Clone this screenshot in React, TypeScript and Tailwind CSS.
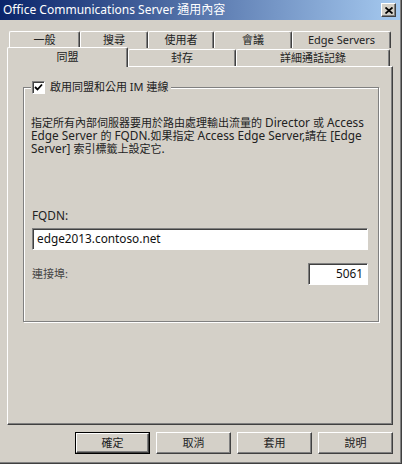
import React from "react";

const font = { fontFamily: '"Noto Sans", "Noto Sans CJK TC", sans-serif' };

function Tab({ w, label, sel, down }: { w: string; label: string; sel?: boolean; down?: boolean }) {
  return (
    <div
      className={`${w} ${sel ? "relative z-10 h-[20px] bg-[#d4d0c8]" : down ? "mt-[2px] h-[17px]" : "h-[17px]"} flex items-start justify-center border-l border-t border-white border-r border-r-[#404040] shadow-[inset_-1px_0_0_#808080] rounded-t-[2px] text-[11px] leading-[14px] text-[#222] ${sel ? "pt-[2px]" : "pt-[1px]"}`}
    >
      {label}
    </div>
  );
}

function Button({ label, def }: { label: string; def?: boolean }) {
  return (
    <div className={`w-[75px] h-[22px] ${def ? "border border-black" : ""}`}>
      <div className="h-full w-full flex items-center justify-center text-[11px] text-[#222] border-l border-t border-white border-r border-b border-r-[#404040] border-b-[#404040] shadow-[inset_-1px_-1px_0_#808080]">
        {label}
      </div>
    </div>
  );
}

function L({ children }: { children: React.ReactNode }) {
  return <span className="text-[11.8px]">{children}</span>;
}

export default function App() {
  return (
    <div style={font} className="w-[402px] h-[464px] border-r border-b border-[#404040] bg-[#d4d0c8]">
      <div className="h-full w-full border-r border-b border-[#808080] flex flex-col">
        {/* title bar */}
        <div className="h-[20px] flex items-center justify-between bg-[linear-gradient(to_right,#0a246a,#a6caf0)]">
          <span className="pl-[3px] text-white text-[12px] leading-[20px] whitespace-nowrap">
            Office Communications Server 通用內容
          </span>
          <div className="mr-[4px] w-[15px] h-[14px] bg-[#d4d0c8] border-l border-t border-white border-r border-b border-r-[#404040] border-b-[#404040] shadow-[inset_-1px_-1px_0_#808080] flex items-center justify-center">
            <svg width="8" height="7" viewBox="0 0 8 7">
              <path d="M0.5 0.5 L7.5 6.5 M7.5 0.5 L0.5 6.5" stroke="#000" strokeWidth="1.8" />
            </svg>
          </div>
        </div>

        {/* tabs */}
        <div className="pt-[11px]">
          <div className="flex pl-[9px] h-[16px]">
            <Tab w="w-[71px]" label="一般" />
            <Tab w="w-[68px]" label="搜尋" />
            <Tab w="w-[66px]" label="使用者" />
            <Tab w="w-[78px]" label="會議" />
            <Tab w="w-[99px]" label="Edge Servers" />
          </div>
          <div className="flex items-start pl-[7px] h-[19px]">
            <Tab w="w-[121px]" label="同盟" sel />
            <Tab w="w-[108px]" label="封存" down />
            <Tab w="w-[154px]" label="詳細通話記錄" down />
          </div>
        </div>

        {/* panel */}
        <div className="ml-[7px] w-[386px] h-[359px] border-l border-t border-white border-r border-b border-r-[#404040] border-b-[#404040] shadow-[inset_-1px_-1px_0_#808080] pt-[20px] pl-[15px]">
          <div className="relative w-[356px] h-[235px] border border-[#808080] shadow-[inset_1px_1px_0_#fff,1px_1px_0_#fff] pl-[7px] pr-[10px]">
            <div className="absolute left-[7px] top-[-8px] flex items-center gap-[5px] bg-[#d4d0c8] pl-px pr-[3px]">
              <div className="w-[13px] h-[13px] bg-white border-l border-t border-[#808080] border-r border-b border-r-white border-b-white shadow-[inset_1px_1px_0_#404040] flex items-center justify-center">
                <svg width="9" height="9" viewBox="0 0 9 9">
                  <path d="M1 4 L3.5 6.5 L8 1.5" stroke="#000" strokeWidth="1.8" fill="none" />
                </svg>
              </div>
              <span className="text-[11px] leading-[14px] text-[#222] whitespace-nowrap">啟用同盟和公用 IM 連線</span>
            </div>

            <div className="pt-[28px] text-[11px] leading-[13px] text-[#222] whitespace-nowrap">
              <div className="h-[13px] flex items-center">
                <span>
                  指定所有內部伺服器要用於路由處理輸出流量的<L> Director </L>或<L> Access</L>
                </span>
              </div>
              <div className="h-[13px] flex items-center">
                <span>
                  <L>Edge Server </L>的<L> FQDN.</L>如果指定<L> Access Edge Server,</L>請在<L> [Edge</L>
                </span>
              </div>
              <div className="h-[13px] flex items-center">
                <span>
                  <L>Server] </L>索引標籤上設定它<L>.</L>
                </span>
              </div>
            </div>

            <div className="mt-[54px] pl-px text-[11.8px] leading-[13px] text-[#222]">FQDN:</div>
            <div className="mt-[6px] ml-px h-[22px] bg-white border-l border-t border-[#808080] border-r border-b border-r-white border-b-white shadow-[inset_1px_1px_0_#404040] flex items-center pl-[4px] text-[11.8px] text-[#111]">
              edge2013.contoso.net
            </div>
            <div className="mt-[13px] ml-px flex items-center justify-between">
              <span className="text-[11px] text-[#444]">連接埠:</span>
              <div className="w-[60px] h-[22px] bg-white border-l border-t border-[#808080] border-r border-b border-r-white border-b-white shadow-[inset_1px_1px_0_#404040] flex items-center justify-end pr-[4px] text-[11.8px] text-[#111]">
                5061
              </div>
            </div>
          </div>
        </div>

        {/* buttons */}
        <div className="mt-[7px] flex justify-end gap-[6px] pr-[7px]">
          <Button label="確定" def />
          <Button label="取消" />
          <Button label="套用" />
          <Button label="說明" />
        </div>
      </div>
    </div>
  );
}
